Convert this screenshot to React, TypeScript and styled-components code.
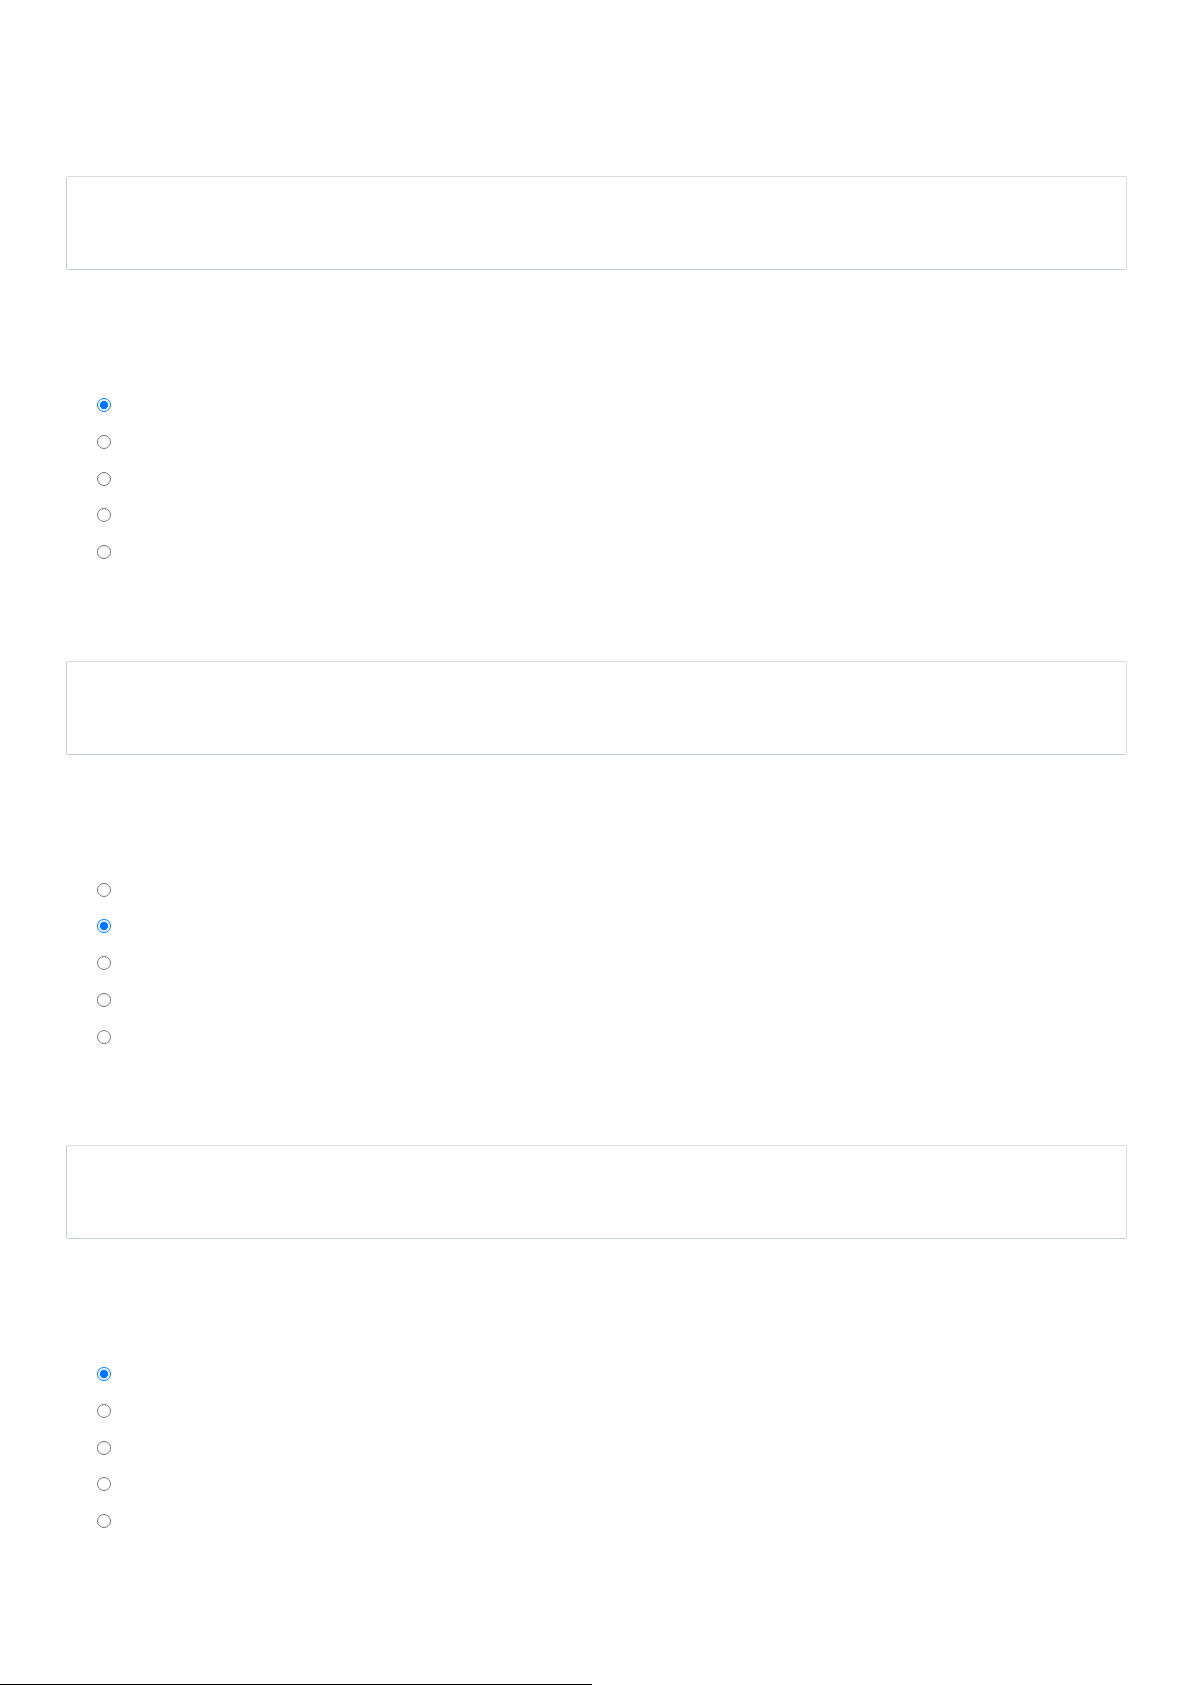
import React, { useState } from "react";
import styled, { createGlobalStyle } from "styled-components";

const GlobalStyle = createGlobalStyle`
  html, body {
    margin: 0;
    padding: 0;
    background: #ffffff;
    font-family: "Liberation Sans", Arial, sans-serif;
    font-size: 16px;
    color: #212529;
  }
`;

type Question = {
  id: string;
  options: number;
  initial: number;
};

const questions: Question[] = [
  { id: "q1", options: 5, initial: 0 },
  { id: "q2", options: 5, initial: 1 },
  { id: "q3", options: 5, initial: 0 },
];

const QuestionBlock: React.FC<{ question: Question }> = ({ question }) => {
  const [selected, setSelected] = useState<number>(question.initial);

  return (
    <Section>
      <Prompt aria-hidden="true" />
      <AnswerBox rows={3} aria-label={question.id} readOnly />
      <OptionList>
        {Array.from({ length: question.options }).map((_, i) => (
          <OptionRow key={i}>
            <RadioInput
              type="radio"
              name={question.id}
              checked={selected === i}
              onChange={() => setSelected(i)}
            />
            <OptionLabel />
          </OptionRow>
        ))}
      </OptionList>
    </Section>
  );
};

const App: React.FC = () => {
  return (
    <>
      <GlobalStyle />
      <Page>
        {questions.map((q) => (
          <QuestionBlock key={q.id} question={q} />
        ))}
        <Footer>
          <FooterBar />
        </Footer>
      </Page>
    </>
  );
};

const Page = styled.main`
  display: flex;
  flex-direction: column;
  padding: 86px 64px 0 66px;
  min-height: 1685px;
  box-sizing: border-box;
  overflow: hidden;
`;

const Section = styled.section`
  display: flex;
  flex-direction: column;
`;

const Prompt = styled.div`
  height: 90px;
`;

const AnswerBox = styled.textarea`
  display: block;
  box-sizing: border-box;
  width: 100%;
  height: 94px;
  margin: 0;
  padding: 6px 12px;
  resize: none;
  background: #ffffff;
  border: 1px solid #d8dce1;
  border-left-color: #c5cbd4;
  border-bottom-color: #cad0d8;
  border-radius: 2px;
  font-family: inherit;
  font-size: 16px;
  outline: none;
`;

const OptionList = styled.div`
  display: flex;
  flex-direction: column;
  margin-top: 116.75px;
  padding-left: 31px;
`;

const OptionRow = styled.label`
  display: flex;
  align-items: center;
  gap: 8px;
  height: 36.75px;
`;

const RadioInput = styled.input`
  width: 14px;
  height: 14px;
  margin: 0;
`;

const OptionLabel = styled.span`
  font-size: 16px;
  line-height: 24px;
`;

const Footer = styled.footer`
  margin: 144.5px -64px 0 -66px;
`;

const FooterBar = styled.div`
  width: 592px;
  height: 40px;
  background: #000000;
`;

export default App;
